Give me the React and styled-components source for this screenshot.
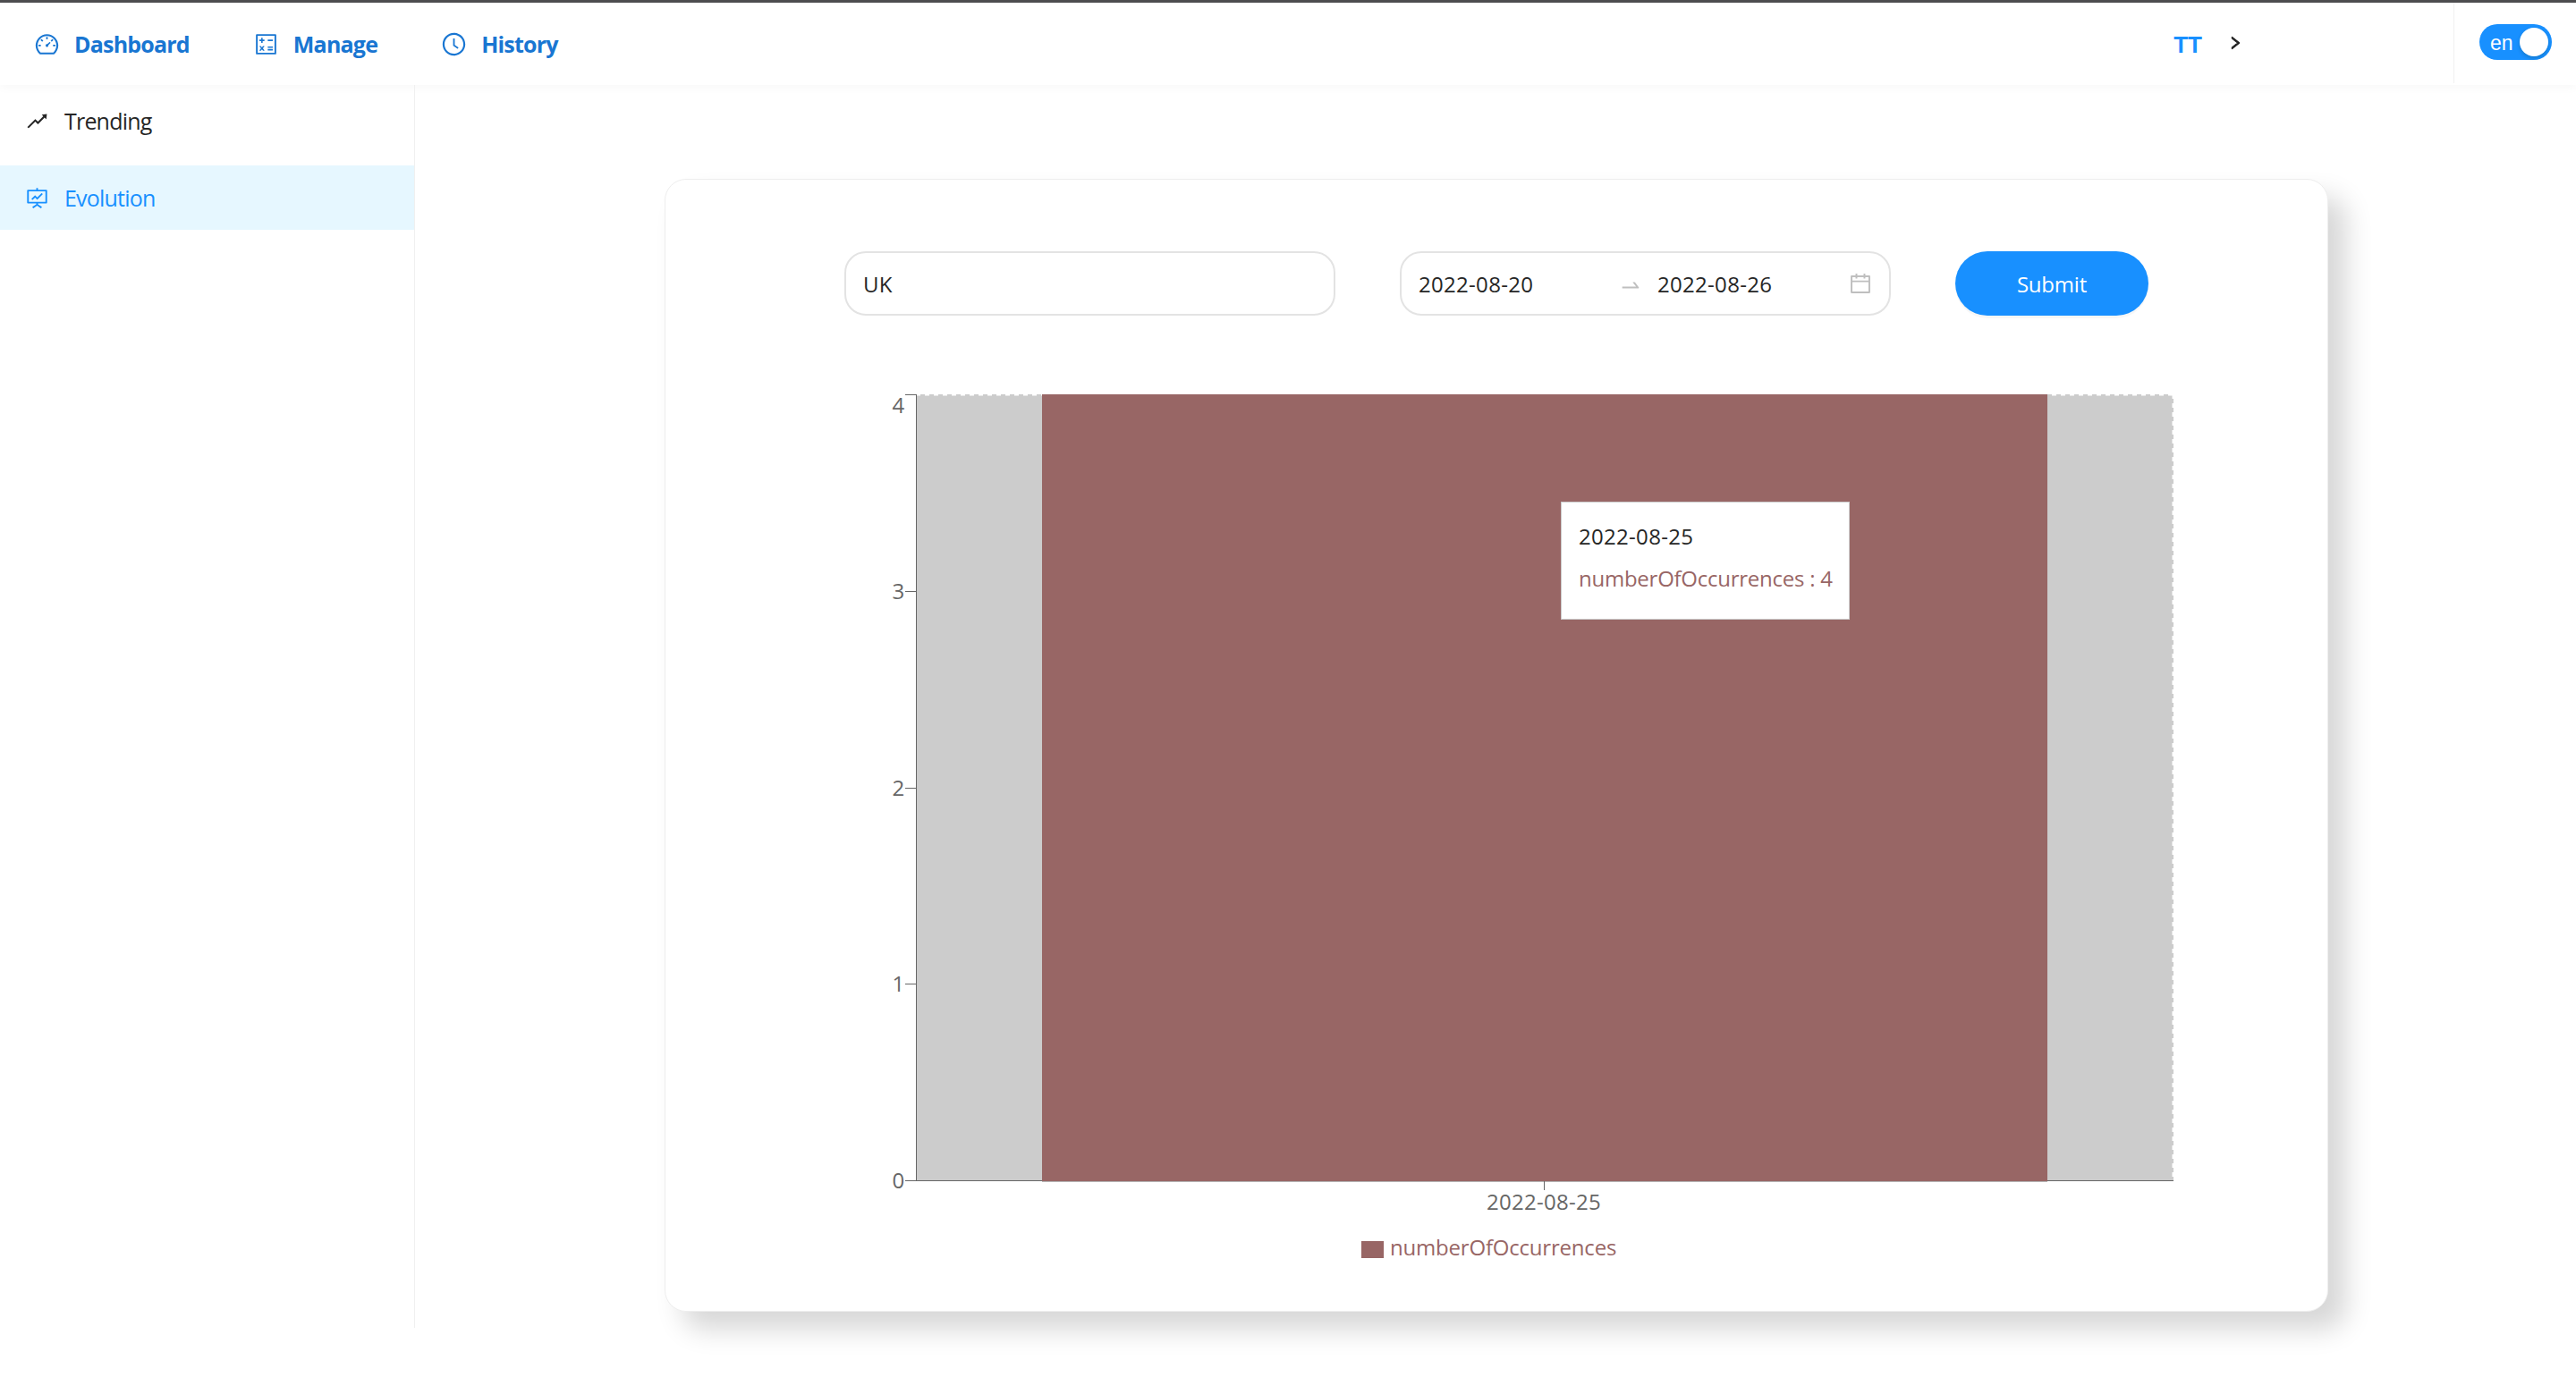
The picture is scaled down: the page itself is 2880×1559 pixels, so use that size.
import React from 'react';
import styled, { createGlobalStyle } from 'styled-components';
import {
    AiOutlineDashboard,
    AiOutlineCalculator,
    AiOutlineClockCircle,
    AiOutlineRise,
    AiOutlineFundProjectionScreen,
    AiOutlineCalendar,
    AiOutlineSwapRight,
    AiOutlineRight,
} from 'react-icons/ai';

const FONT = '"Open Sans", "Noto Sans", sans-serif';
const BAR = '#986665';

const GlobalStyle = createGlobalStyle`
  html, body { margin: 0; padding: 0; background: #fff; }
  body { font-family: ${FONT}; color: #262626; }
`;

const Page = styled.div`
  width: 2880px;
  height: 1559px;
  overflow: hidden;
  border-top: 3px solid #4d4d4f;
  box-sizing: border-box;
`;

const Header = styled.header`
  display: flex;
  height: 92px;
  box-shadow: 0 3px 10px rgba(0, 0, 0, 0.03);
`;

const Nav = styled.nav`
  flex: 1;
  display: flex;
  align-items: center;
  padding-left: 38px;
  gap: 71px;
`;

const NavLink = styled.a`
  display: flex;
  align-items: center;
  gap: 16px;
  color: #1976d2;
  font-size: 25px;
  font-weight: 700;
  letter-spacing: -0.8px;
  svg { font-size: 29px; }
`;

const User = styled.div`
  display: flex;
  align-items: center;
  gap: 28px;
  margin-right: 235px;
  margin-top: 2px;
  color: #1890ff;
  font-family: "Liberation Sans", sans-serif;
  font-size: 26px;
  font-weight: 700;
  svg { color: #222; font-size: 18px; stroke-width: 60; margin-top: -4px; }
`;

const LangBox = styled.div`
  width: 137px;
  height: 90px;
  display: flex;
  align-items: center;
  border-left: 1px solid #f0f0f0;
  padding-left: 28px;
  box-sizing: border-box;
`;

const Switch = styled.div`
  position: relative;
  width: 81px;
  height: 40px;
  margin-top: -2px;
  border-radius: 20px;
  background: #1890ff;
  color: #fff;
  font-family: "Liberation Sans", sans-serif;
  font-size: 23px;
  line-height: 42px;
  padding-left: 12px;
  box-sizing: border-box;
`;

const Knob = styled.span`
  position: absolute;
  top: 4px;
  right: 4px;
  width: 32px;
  height: 32px;
  border-radius: 50%;
  background: #fff;
  box-shadow: 0 2px 4px rgba(0, 35, 11, 0.2);
`;

const Body = styled.div`
  display: flex;
  align-items: flex-start;
`;

const Sidebar = styled.aside`
  width: 464px;
  height: 1390px;
  flex-shrink: 0;
  box-sizing: border-box;
  padding-top: 4px;
  display: flex;
  flex-direction: column;
  gap: 14px;
  border-right: 1px solid #f0f0f0;
`;

const MenuItem = styled.div`
  height: 72px;
  display: flex;
  align-items: center;
  gap: 17px;
  padding-left: 28px;
  font-size: 25px;
  letter-spacing: -0.8px;
  color: ${(p) => (p.$active ? '#1890ff' : '#262626')};
  background: ${(p) => (p.$active ? '#e6f7ff' : 'transparent')};
  svg { font-size: 27px; }
`;

const Main = styled.main`
  flex: 1;
  padding: 105px 0 0 279px;
`;

const Card = styled.section`
  position: relative;
  width: 1860px;
  height: 1267px;
  box-sizing: border-box;
  padding-top: 80px;
  border: 1px solid #eee;
  border-radius: 24px;
  background: #fff;
  box-shadow: 20px 20px 30px rgba(0, 0, 0, 0.16);
`;

const FormRow = styled.div`
  display: flex;
  gap: 72px;
  padding-left: 200px;
`;

const Field = styled.div`
  width: 549px;
  height: 72px;
  box-sizing: border-box;
  display: flex;
  align-items: center;
  padding: 0 20px 0 19px;
  border: 2px solid #e3e3e3;
  border-radius: 24px;
  font-size: 24px;
  letter-spacing: 0.3px;
  color: #262626;
`;

const DateText = styled.span`
  width: ${(p) => p.$width}px;
`;

const ArrowIcon = styled(AiOutlineSwapRight)`
  color: #bfbfbf;
  font-size: 26px;
  margin-right: 17px;
  margin-top: 3px;
`;

const CalendarIcon = styled(AiOutlineCalendar)`
  color: #bfbfbf;
  font-size: 28px;
  margin-left: auto;
  margin-right: -2px;
`;

const SubmitButton = styled.button`
  width: 216px;
  height: 72px;
  border: 0;
  border-radius: 36px;
  background: #1890ff;
  color: #fff;
  font-family: ${FONT};
  font-size: 24px;
  letter-spacing: -0.2px;
  box-shadow: 0 3px 0 rgba(0, 0, 0, 0.03);
`;

const ChartWrap = styled.div`
  margin-top: 72px;
`;

const Chart = styled.svg`
  display: block;
  font-family: ${FONT};
  font-size: 24px;
  letter-spacing: -0.2px;
`;

const AxisDate = styled.text`
  letter-spacing: 0.3px;
`;

const Tooltip = styled.div`
  position: absolute;
  left: 1001px;
  top: 360px;
  width: 323px;
  height: 132px;
  box-sizing: border-box;
  padding: 21px 19px 0;
  background: #fff;
  border: 1px solid #ccc;
  font-size: 24px;
  letter-spacing: -0.25px;
  line-height: 33px;
  white-space: nowrap;
`;

const TooltipLabel = styled.div`
  color: #262626;
  margin-bottom: 14px;
  letter-spacing: 0.3px;
`;

const TooltipValue = styled.div`
  color: ${BAR};
`;

const yTicks = [
    { value: 4, tickY: 441, labelY: 462 },
    { value: 3, tickY: 661, labelY: 670 },
    { value: 2, tickY: 881, labelY: 890 },
    { value: 1, tickY: 1100, labelY: 1109 },
    { value: 0, tickY: 1320, labelY: 1329 },
];

// the svg uses page coordinates so the numbers stay comparable
const EvolutionChart = () => (
    <Chart width="1858" height="1030" viewBox="744 425 1858 1030">
        <rect x="1024" y="441" width="1406" height="879" fill="#ccc" />
        <path d="M1024 441.5H2430M2429.5 441V1320" stroke="#fff" strokeWidth="2" strokeDasharray="5 5" fill="none" />
        <path d="M1024.5 441V1320M1024 1320.5H2430" stroke="#666" fill="none" />
        <rect x="1165" y="441" width="1124" height="880" fill={BAR} />
        <path d="M1165 1321.5H2289" stroke="#b5b5b5" />
        {yTicks.map((t) => (
            <g key={t.value}>
                <path d={`M1012 ${t.tickY + 0.5}H1024`} stroke="#666" />
                <text x="1011" y={t.labelY} textAnchor="end" fill="#666">{t.value}</text>
            </g>
        ))}
        <path d="M1726.5 1321V1331" stroke="#666" />
        <AxisDate x="1726" y="1353" textAnchor="middle" fill="#666">2022-08-25</AxisDate>
        <rect x="1522" y="1388" width="25" height="19" fill={BAR} />
        <text x="1554" y="1404" fill={BAR}>numberOfOccurrences</text>
    </Chart>
);

const App = () => (
    <Page>
        <GlobalStyle />
        <Header>
            <Nav>
                <NavLink><AiOutlineDashboard />Dashboard</NavLink>
                <NavLink><AiOutlineCalculator />Manage</NavLink>
                <NavLink><AiOutlineClockCircle />History</NavLink>
            </Nav>
            <User>TT <AiOutlineRight /></User>
            <LangBox>
                <Switch>en<Knob /></Switch>
            </LangBox>
        </Header>
        <Body>
            <Sidebar>
                <MenuItem><AiOutlineRise />Trending</MenuItem>
                <MenuItem $active><AiOutlineFundProjectionScreen />Evolution</MenuItem>
            </Sidebar>
            <Main>
                <Card>
                    <FormRow>
                        <Field>UK</Field>
                        <Field>
                            <DateText $width={224}>2022-08-20</DateText>
                            <ArrowIcon />
                            <span>2022-08-26</span>
                            <CalendarIcon />
                        </Field>
                        <SubmitButton>Submit</SubmitButton>
                    </FormRow>
                    <ChartWrap>
                        <EvolutionChart />
                    </ChartWrap>
                    <Tooltip>
                        <TooltipLabel>2022-08-25</TooltipLabel>
                        <TooltipValue>numberOfOccurrences : 4</TooltipValue>
                    </Tooltip>
                </Card>
            </Main>
        </Body>
    </Page>
);

export default App;
